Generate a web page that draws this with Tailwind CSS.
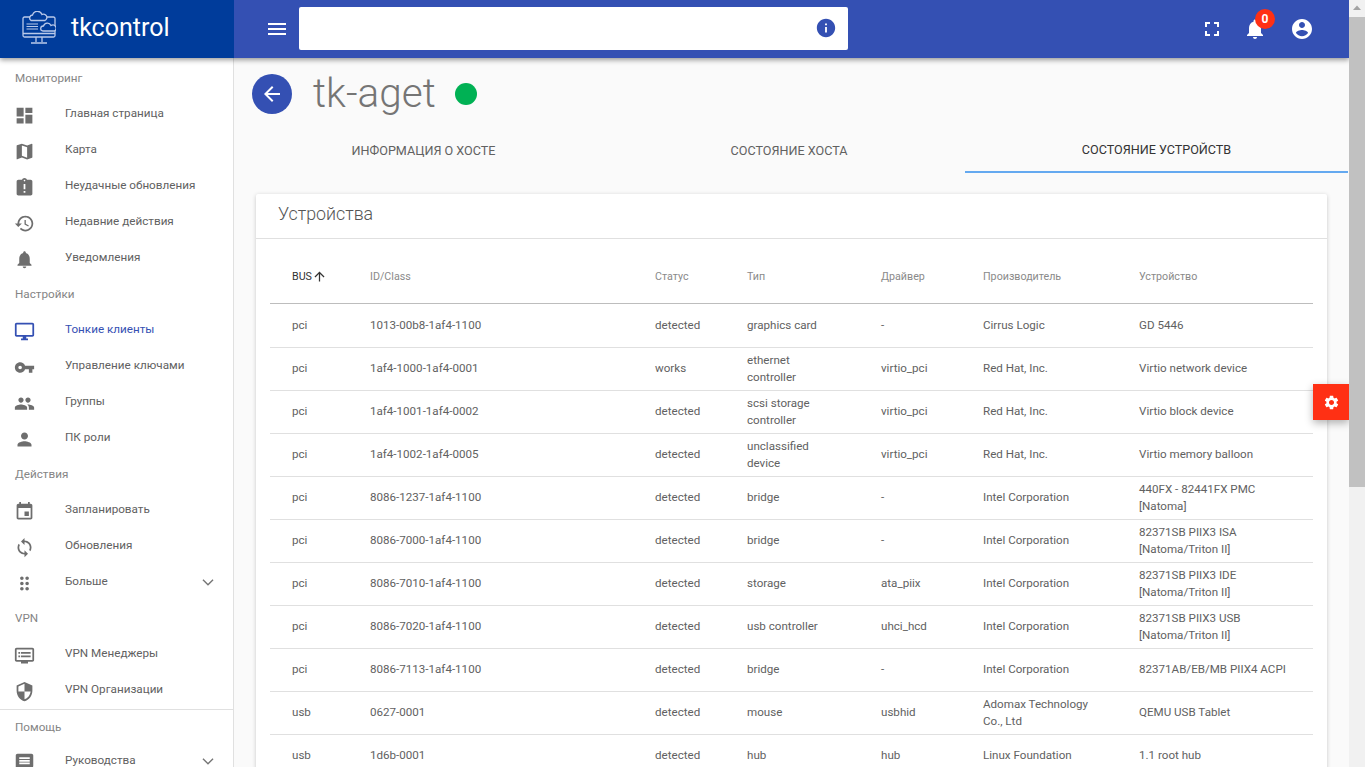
<!DOCTYPE html>
<html lang="ru">
<head>
  <meta charset="UTF-8">
  <title>tkcontrol</title>
  <script src="https://cdn.jsdelivr.net/npm/@tailwindcss/browser@4"></script>
</head>
<body class="h-screen overflow-hidden flex bg-[#fafafa] text-[#616161] font-['Roboto',sans-serif]">

  <div class="relative w-[1349px] h-[767px] overflow-hidden flex flex-col">
    <!-- шапка -->
    <header class="relative z-20 h-[58px] shrink-0 flex bg-[#3450b3] text-white shadow-[0_2px_5px_rgba(0,0,0,0.4)]">
      <div class="w-[234px] shrink-0 bg-[#003c9b] flex items-center pl-[22px] gap-[15px]">
        <svg class="w-[34px] h-[34px] mt-[-2px]" viewBox="0 0 34 34" fill="none" stroke="#b9c9ea" stroke-width="1.3">
          <path d="M8 6H2.5A1.5 1.5 0 0 0 1 7.500V24.500A1.500 1.500 0 0 0 2.500 26H31.500A1.500 1.500 0 0 0 33 24.500V7.500A1.500 1.500 0 0 0 31.500 6H24"/>
          <path d="M1 22.500H33M14 26V31M20 26V31M9 32H25"/>
          <path d="M9 9.500a3 3 0 0 1 1.500-5.500a5 5 0 0 1 9.500-.5a3.200 3.200 0 0 1 3 6z" fill="#003c9b"/>
          <path d="M4.500 13H16M4.500 15.500H16M4.500 18H16" stroke-width="1.200"/>
          <path d="M21 20a2.500 2.500 0 0 1 .5-5a4 4 0 0 1 7.500-.5a2.800 2.800 0 0 1 3.500 5.500z" fill="#003c9b"/>
        </svg>
        <span class="text-[25px] leading-none mt-[-3px]">tkcontrol</span>
      </div>
      <div class="flex-1 flex items-center pl-[31px] pr-[35px]">
        <svg class="w-6 h-6 fill-white mr-[10px]" viewBox="0 0 24 24"><path d="M3 18h18v-2H3v2zm0-5h18v-2H3v2zm0-7v2h18V6H3z"/></svg>
        <div class="w-[549px] h-[43px] mb-0.5 bg-white rounded-[2px] flex items-center justify-end pr-[11px]">
          <svg class="w-[22px] h-[22px] fill-[#3450b3]" viewBox="0 0 24 24"><path d="M12 2C6.480 2 2 6.480 2 12s4.480 10 10 10 10-4.480 10-10S17.520 2 12 2zm1 15h-2v-6h2v6zm0-8h-2V7h2v2z"/></svg>
        </div>
        <div class="ml-auto flex items-center">
          <svg class="w-6 h-6 fill-white" viewBox="0 0 24 24"><path d="M7 14H5v5h5v-2H7v-3zm-2-4h2V7h3V5H5v5zm12 7h-3v2h5v-5h-2v3zM14 5v2h3v3h2V5h-5z"/></svg>
          <div class="relative w-6 h-6 ml-[19px] mr-[23px]">
            <svg class="w-6 h-6 fill-white" viewBox="0 0 24 24"><path d="M12 22c1.100 0 2-.9 2-2h-4c0 1.100.9 2 2 2zm6-6v-5c0-3.070-1.630-5.640-4.500-6.320V4c0-.83-.67-1.500-1.500-1.500s-1.500.67-1.500 1.500v.68C7.640 5.360 6 7.920 6 11v5l-2 2v1h16v-1l-2-2z"/></svg>
            <span class="absolute left-[12px] top-[-8px] w-5 h-5 rounded-full bg-[#ff3014] text-white text-[12px] font-bold flex items-center justify-center">0</span>
          </div>
          <svg class="w-6 h-6 fill-white" viewBox="0 0 24 24"><path d="M12 2C6.480 2 2 6.480 2 12s4.480 10 10 10 10-4.480 10-10S17.520 2 12 2zm0 3c1.660 0 3 1.340 3 3s-1.340 3-3 3-3-1.340-3-3 1.340-3 3-3zm0 14.200c-2.500 0-4.710-1.280-6-3.220.03-1.990 4-3.080 6-3.080 1.990 0 5.970 1.090 6 3.080-1.290 1.940-3.500 3.220-6 3.220z"/></svg>
        </div>
      </div>
    </header>

    <div class="flex flex-1 min-h-0">
      <!-- боковое меню -->
      <aside class="w-[234px] shrink-0 bg-white border-r border-[#e0e0e0] pt-0.5 text-[11.7px] overflow-hidden [&_a>svg:first-child]:mt-0.5 [&_a>svg:first-child]:fill-[#6e6e6e]">
        <div class="h-9 flex items-center pl-[15px] pt-0.5 text-[#858585]">Мониторинг</div>
        <a class="h-9 flex items-center pl-[14px]"><svg class="w-[21px] h-[21px] mr-[30px]" viewBox="0 0 24 24"><path d="M3 13h8V3H3v10zm0 8h8v-6H3v6zm10 0h8V11h-8v10zm0-18v6h8V3h-8z"/></svg>Главная страница</a>
        <a class="h-9 flex items-center pl-[14px]"><svg class="w-[21px] h-[21px] mr-[30px]" viewBox="0 0 24 24"><path d="M20.500 3l-.16.03L15 5.100 9 3 3.360 4.900c-.21.07-.36.25-.36.48V20.500c0 .28.22.5.5.5l.16-.03L9 18.900l6 2.100 5.640-1.900c.21-.07.36-.25.36-.48V3.500c0-.28-.22-.5-.5-.5zM15 19l-6-2.110V5l6 2.110V19z"/></svg>Карта</a>
        <a class="h-9 flex items-center pl-[14px]"><svg class="w-[21px] h-[21px] mr-[30px]" viewBox="0 0 24 24"><path d="M19 3h-4.180C14.400 1.840 13.300 1 12 1c-1.300 0-2.400.84-2.820 2H5c-1.100 0-2 .9-2 2v14c0 1.100.9 2 2 2h14c1.100 0 2-.9 2-2V5c0-1.100-.9-2-2-2zm-6 15h-2v-2h2v2zm0-4h-2V8h2v6zm-1-9c-.55 0-1-.45-1-1s.45-1 1-1 1 .45 1 1-.45 1-1 1z"/></svg>Неудачные обновления</a>
        <a class="h-9 flex items-center pl-[14px]"><svg class="w-[21px] h-[21px] mr-[30px]" viewBox="0 0 24 24"><path d="M13 3c-4.970 0-9 4.030-9 9H1l3.890 3.890.07.14L9 12H6c0-3.870 3.130-7 7-7s7 3.130 7 7-3.130 7-7 7c-1.930 0-3.680-.79-4.940-2.060l-1.420 1.420C8.270 19.990 10.510 21 13 21c4.970 0 9-4.030 9-9s-4.030-9-9-9zm-1 5v5l4.280 2.540.72-1.210-3.500-2.080V8H12z"/></svg>Недавние действия</a>
        <a class="h-9 flex items-center pl-[14px]"><svg class="w-[21px] h-[21px] mr-[30px]" viewBox="0 0 24 24"><path d="M12 22c1.100 0 2-.9 2-2h-4c0 1.100.9 2 2 2zm6-6v-5c0-3.070-1.630-5.640-4.500-6.320V4c0-.83-.67-1.500-1.500-1.500s-1.500.67-1.500 1.500v.68C7.640 5.360 6 7.920 6 11v5l-2 2v1h16v-1l-2-2z"/></svg>Уведомления</a>

        <div class="h-9 flex items-center pl-[15px] pt-0.5 text-[#858585]">Настройки</div>
        <a class="h-9 flex items-center pl-[14px] text-[#3450b3] [&>svg:first-child]:!fill-[#3450b3]"><svg class="w-[21px] h-[21px] mr-[30px]" viewBox="0 0 24 24"><path d="M21 2H3c-1.100 0-2 .9-2 2v12c0 1.100.9 2 2 2h7v2H8v2h8v-2h-2v-2h7c1.100 0 2-.9 2-2V4c0-1.100-.9-2-2-2zm0 14H3V4h18v12z"/></svg>Тонкие клиенты</a>
        <a class="h-9 flex items-center pl-[14px]"><svg class="w-[21px] h-[21px] mr-[30px]" viewBox="0 0 24 24"><path d="M12.650 10C11.830 7.670 9.610 6 7 6c-3.310 0-6 2.690-6 6s2.690 6 6 6c2.610 0 4.830-1.670 5.650-4H17v4h4v-4h2v-4H12.650zM7 14c-1.100 0-2-.9-2-2s.9-2 2-2 2 .9 2 2-.9 2-2 2z"/></svg>Управление ключами</a>
        <a class="h-9 flex items-center pl-[14px]"><svg class="w-[21px] h-[21px] mr-[30px]" viewBox="0 0 24 24"><path d="M16 11c1.660 0 2.990-1.340 2.990-3S17.660 5 16 5c-1.660 0-3 1.340-3 3s1.340 3 3 3zm-8 0c1.660 0 2.990-1.340 2.990-3S9.660 5 8 5C6.340 5 5 6.340 5 8s1.340 3 3 3zm0 2c-2.330 0-7 1.170-7 3.500V19h14v-2.500c0-2.330-4.670-3.500-7-3.500zm8 0c-.29 0-.62.02-.97.05 1.160.84 1.970 1.970 1.970 3.450V19h6v-2.500c0-2.330-4.670-3.500-7-3.500z"/></svg>Группы</a>
        <a class="h-9 flex items-center pl-[14px]"><svg class="w-[21px] h-[21px] mr-[30px]" viewBox="0 0 24 24"><path d="M12 12c2.210 0 4-1.790 4-4s-1.790-4-4-4-4 1.790-4 4 1.790 4 4 4zm0 2c-2.670 0-8 1.340-8 4v2h16v-2c0-2.660-5.330-4-8-4z"/></svg>ПК роли</a>

        <div class="h-9 flex items-center pl-[15px] pt-0.5 text-[#858585]">Действия</div>
        <a class="h-9 flex items-center pl-[14px]"><svg class="w-[21px] h-[21px] mr-[30px]" viewBox="0 0 24 24"><path d="M17 12h-5v5h5v-5zM16 1v2H8V1H6v2H5c-1.110 0-1.990.9-1.990 2L3 19c0 1.100.89 2 2 2h14c1.100 0 2-.9 2-2V5c0-1.100-.9-2-2-2h-1V1h-2zm3 18H5V8h14v11z"/></svg>Запланировать</a>
        <a class="h-9 flex items-center pl-[14px]"><svg class="w-[21px] h-[21px] mr-[30px]" viewBox="0 0 24 24"><path d="M12 4V1L8 5l4 4V6c3.310 0 6 2.690 6 6 0 1.010-.25 1.970-.7 2.800l1.460 1.460C19.540 15.030 20 13.570 20 12c0-4.420-3.580-8-8-8zm0 14c-3.310 0-6-2.690-6-6 0-1.010.25-1.970.7-2.800L5.240 7.740C4.460 8.970 4 10.430 4 12c0 4.420 3.580 8 8 8v3l4-4-4-4v3z"/></svg>Обновления</a>
        <a class="h-9 flex items-center pl-[14px]"><svg class="w-[21px] h-[21px] mr-[30px]" viewBox="0 0 24 24"><path d="M11 18c0 1.100-.9 2-2 2s-2-.9-2-2 .9-2 2-2 2 .9 2 2zm-2-8c-1.100 0-2 .9-2 2s.9 2 2 2 2-.9 2-2-.9-2-2-2zm0-6c-1.100 0-2 .9-2 2s.9 2 2 2 2-.9 2-2-.9-2-2-2zm6 4c1.100 0 2-.9 2-2s-.9-2-2-2-2 .9-2 2 .9 2 2 2zm0 2c-1.100 0-2 .9-2 2s.9 2 2 2 2-.9 2-2-.9-2-2-2zm0 6c-1.100 0-2 .9-2 2s.9 2 2 2 2-.9 2-2-.9-2-2-2z"/></svg>Больше<svg class="w-[22px] h-[22px] fill-none stroke-[#757575] stroke-[1.5] ml-auto mr-[14px]" viewBox="0 0 24 24"><path d="M6.500 9.500L12 15l5.500-5.500"/></svg></a>

        <div class="h-9 flex items-center pl-[15px] pt-0.5 text-[#858585]">VPN</div>
        <a class="h-9 flex items-center pl-[14px]"><svg class="w-[21px] h-[21px] mr-[30px]" viewBox="0 0 24 24"><path d="M21 3H3c-1.100 0-2 .9-2 2v12c0 1.100.9 2 2 2h5v2h8v-2h5c1.100 0 1.990-.9 1.990-2L23 5c0-1.100-.9-2-2-2zm0 14H3V5h18v12zm-2-9H8v2h11V8zm0 4H8v2h11v-2zM7 8H5v2h2V8zm0 4H5v2h2v-2z"/></svg>VPN Менеджеры</a>
        <a class="h-9 flex items-center pl-[14px]"><svg class="w-[21px] h-[21px] mr-[30px]" viewBox="0 0 24 24"><path d="M12 1L3 5v6c0 5.550 3.840 10.740 9 12 5.160-1.260 9-6.450 9-12V5l-9-4zm0 10.990h7c-.53 4.120-3.280 7.790-7 8.940V12H5V6.300l7-3.110v8.800z"/></svg>VPN Организации</a>

        <div class="h-[34px] mt-px border-t border-[#e0e0e0] flex items-center pl-[15px] pt-[2px] text-[#858585]">Помощь</div>
        <a class="h-9 flex items-center pl-[14px]"><svg class="w-[21px] h-[21px] mr-[30px]" viewBox="0 0 24 24"><path d="M20 2H4c-1.100 0-1.990.9-1.990 2L2 22l4-4h14c1.100 0 2-.9 2-2V4c0-1.100-.9-2-2-2zm-2 12H6v-2h12v2zm0-3H6V9h12v2zm0-3H6V6h12v2z"/></svg>Руководства<svg class="w-[22px] h-[22px] fill-none stroke-[#757575] stroke-[1.5] ml-auto mr-[14px]" viewBox="0 0 24 24"><path d="M6.500 9.500L12 15l5.500-5.500"/></svg></a>
      </aside>

      <!-- контент -->
      <main class="flex-1 min-w-0">
        <div class="h-[70px] flex items-center pl-[18px] pt-[1px]">
          <div class="w-10 h-10 rounded-full bg-[#3450b3] flex items-center justify-center mr-[21px]">
            <svg class="w-6 h-6 fill-white" viewBox="0 0 24 24"><path d="M20 11H7.830l5.590-5.590L12 4l-8 8 8 8 1.410-1.410L7.830 13H20v-2z"/></svg>
          </div>
          <h1 class="text-[40.5px] font-light leading-none text-[#757575] mr-[19px] mb-[1px]">tk-aget</h1>
          <span class="w-[22px] h-[22px] rounded-full bg-[#00b154]"></span>
        </div>

        <nav class="flex h-[45px] text-[12.6px] uppercase">
          <div class="w-[379px] flex items-center justify-center pt-[2px]">Информация о хосте</div>
          <div class="w-[352px] flex items-center justify-center pt-[2px]">Состояние хоста</div>
          <div class="w-[383px] flex items-center justify-center pt-[2px] border-b-2 border-[#64a9f0] text-[#333]">Состояние устройств</div>
        </nav>

        <section class="ml-[22px] mt-[21px] w-[1071px] bg-white shadow-[0_1px_4px_rgba(0,0,0,0.2)] rounded-[2px]">
          <h2 class="h-[45px] flex items-center pl-[22px] pb-1 text-[17.8px] font-light text-[#555] border-b border-[#e0e0e0]">Устройства</h2>
          <div class="px-[14px] pt-3">
            <table class="w-[1043px] table-fixed text-[11.6px] text-left leading-[17px]">
              <colgroup>
                <col class="w-[78px]"><col class="w-[285px]"><col class="w-[92px]"><col class="w-[134px]"><col class="w-[102px]"><col class="w-[156px]"><col class="w-[196px]">
              </colgroup>
              <thead>
                <tr class="h-[52px] border-b border-[#bdbdbd] text-[10.7px] text-[#8a8a8a]">
                  <th class="pl-[22px] font-normal text-[#333]"><span class="flex items-center">BUS<svg class="w-[15px] h-[15px] fill-[#333]" viewBox="0 0 24 24"><path d="M4 12l1.410 1.410L11 7.830V20h2V7.830l5.580 5.590L20 12l-8-8-8 8z"/></svg></span></th>
                  <th class="pl-[22px] font-normal">ID/Class</th>
                  <th class="pl-[22px] font-normal">Статус</th>
                  <th class="pl-[22px] font-normal">Тип</th>
                  <th class="pl-[22px] font-normal">Драйвер</th>
                  <th class="pl-[22px] font-normal">Производитель</th>
                  <th class="pl-[22px] font-normal">Устройство</th>
                </tr>
              </thead>
              <tbody class="[&_td]:pl-[22px] [&_td]:pr-[22px] [&_tr]:h-[43px] [&_tr]:border-b [&_tr]:border-[#e0e0e0]">
                <tr><td class="h-[44px]">pci</td><td>1013-00b8-1af4-1100</td><td>detected</td><td>graphics card</td><td>-</td><td>Cirrus Logic</td><td>GD 5446</td></tr>
                <tr><td>pci</td><td>1af4-1000-1af4-0001</td><td>works</td><td>ethernet controller</td><td>virtio_pci</td><td>Red Hat, Inc.</td><td>Virtio network device</td></tr>
                <tr><td>pci</td><td>1af4-1001-1af4-0002</td><td>detected</td><td>scsi storage controller</td><td>virtio_pci</td><td>Red Hat, Inc.</td><td>Virtio block device</td></tr>
                <tr><td>pci</td><td>1af4-1002-1af4-0005</td><td>detected</td><td>unclassified device</td><td>virtio_pci</td><td>Red Hat, Inc.</td><td>Virtio memory balloon</td></tr>
                <tr><td>pci</td><td>8086-1237-1af4-1100</td><td>detected</td><td>bridge</td><td>-</td><td>Intel Corporation</td><td>440FX - 82441FX PMC [Natoma]</td></tr>
                <tr><td>pci</td><td>8086-7000-1af4-1100</td><td>detected</td><td>bridge</td><td>-</td><td>Intel Corporation</td><td>82371SB PIIX3 ISA [Natoma/Triton II]</td></tr>
                <tr><td>pci</td><td>8086-7010-1af4-1100</td><td>detected</td><td>storage</td><td>ata_piix</td><td>Intel Corporation</td><td>82371SB PIIX3 IDE [Natoma/Triton II]</td></tr>
                <tr><td>pci</td><td>8086-7020-1af4-1100</td><td>detected</td><td>usb controller</td><td>uhci_hcd</td><td>Intel Corporation</td><td>82371SB PIIX3 USB [Natoma/Triton II]</td></tr>
                <tr><td>pci</td><td>8086-7113-1af4-1100</td><td>detected</td><td>bridge</td><td>-</td><td>Intel Corporation</td><td>82371AB/EB/MB PIIX4 ACPI</td></tr>
                <tr><td>usb</td><td>0627-0001</td><td>detected</td><td>mouse</td><td>usbhid</td><td>Adomax Technology Co., Ltd</td><td>QEMU USB Tablet</td></tr>
                <tr><td>usb</td><td>1d6b-0001</td><td>detected</td><td>hub</td><td>hub</td><td>Linux Foundation</td><td>1.1 root hub</td></tr>
              </tbody>
            </table>
          </div>
        </section>
      </main>
    </div>

    <!-- кнопка настроек поверх контента -->
    <button class="absolute z-10 left-[1313px] top-[384px] w-9 h-9 bg-[#ff3014] flex items-center justify-center shadow-[0_3px_8px_rgba(0,0,0,0.3)]">
      <svg class="w-[17px] h-[17px] fill-white" viewBox="0 0 24 24"><path d="M19.140 12.940c.04-.3.06-.61.06-.94 0-.32-.02-.64-.07-.94l2.030-1.580c.18-.14.23-.41.12-.61l-1.920-3.320c-.12-.22-.37-.29-.59-.22l-2.390.96c-.5-.38-1.030-.7-1.620-.94l-.36-2.540c-.04-.24-.24-.41-.48-.41h-3.840c-.24 0-.43.17-.47.41l-.36 2.540c-.59.24-1.130.57-1.620.94l-2.390-.96c-.22-.08-.47 0-.59.22L2.740 8.870c-.12.21-.08.47.12.61l2.030 1.580c-.05.3-.09.63-.09.94s.02.64.07.94l-2.030 1.580c-.18.14-.23.41-.12.61l1.920 3.320c.12.22.37.29.59.22l2.390-.96c.5.38 1.030.7 1.620.94l.36 2.540c.05.24.24.41.48.41h3.840c.24 0 .44-.17.47-.41l.36-2.540c.59-.24 1.130-.56 1.620-.94l2.390.96c.22.08.47 0 .59-.22l1.920-3.320c.12-.22.07-.47-.12-.61l-2.010-1.580zM12 15.600c-1.980 0-3.600-1.620-3.600-3.600s1.620-3.600 3.600-3.600 3.600 1.620 3.600 3.600-1.620 3.600-3.600 3.600z"/></svg>
    </button>
  </div>

  <!-- полоса прокрутки -->
  <div class="w-4 h-[767px] shrink-0 bg-[#f1f1f1] flex flex-col items-center">
    <svg class="w-4 h-[17px] fill-[#a3a3a3]" viewBox="0 0 16 17"><path d="M8 5.500l4 4.500H4z"/></svg>
    <div class="w-4 h-[470px] bg-[#c1c1c1]"></div>
  </div>
</body>
</html>
